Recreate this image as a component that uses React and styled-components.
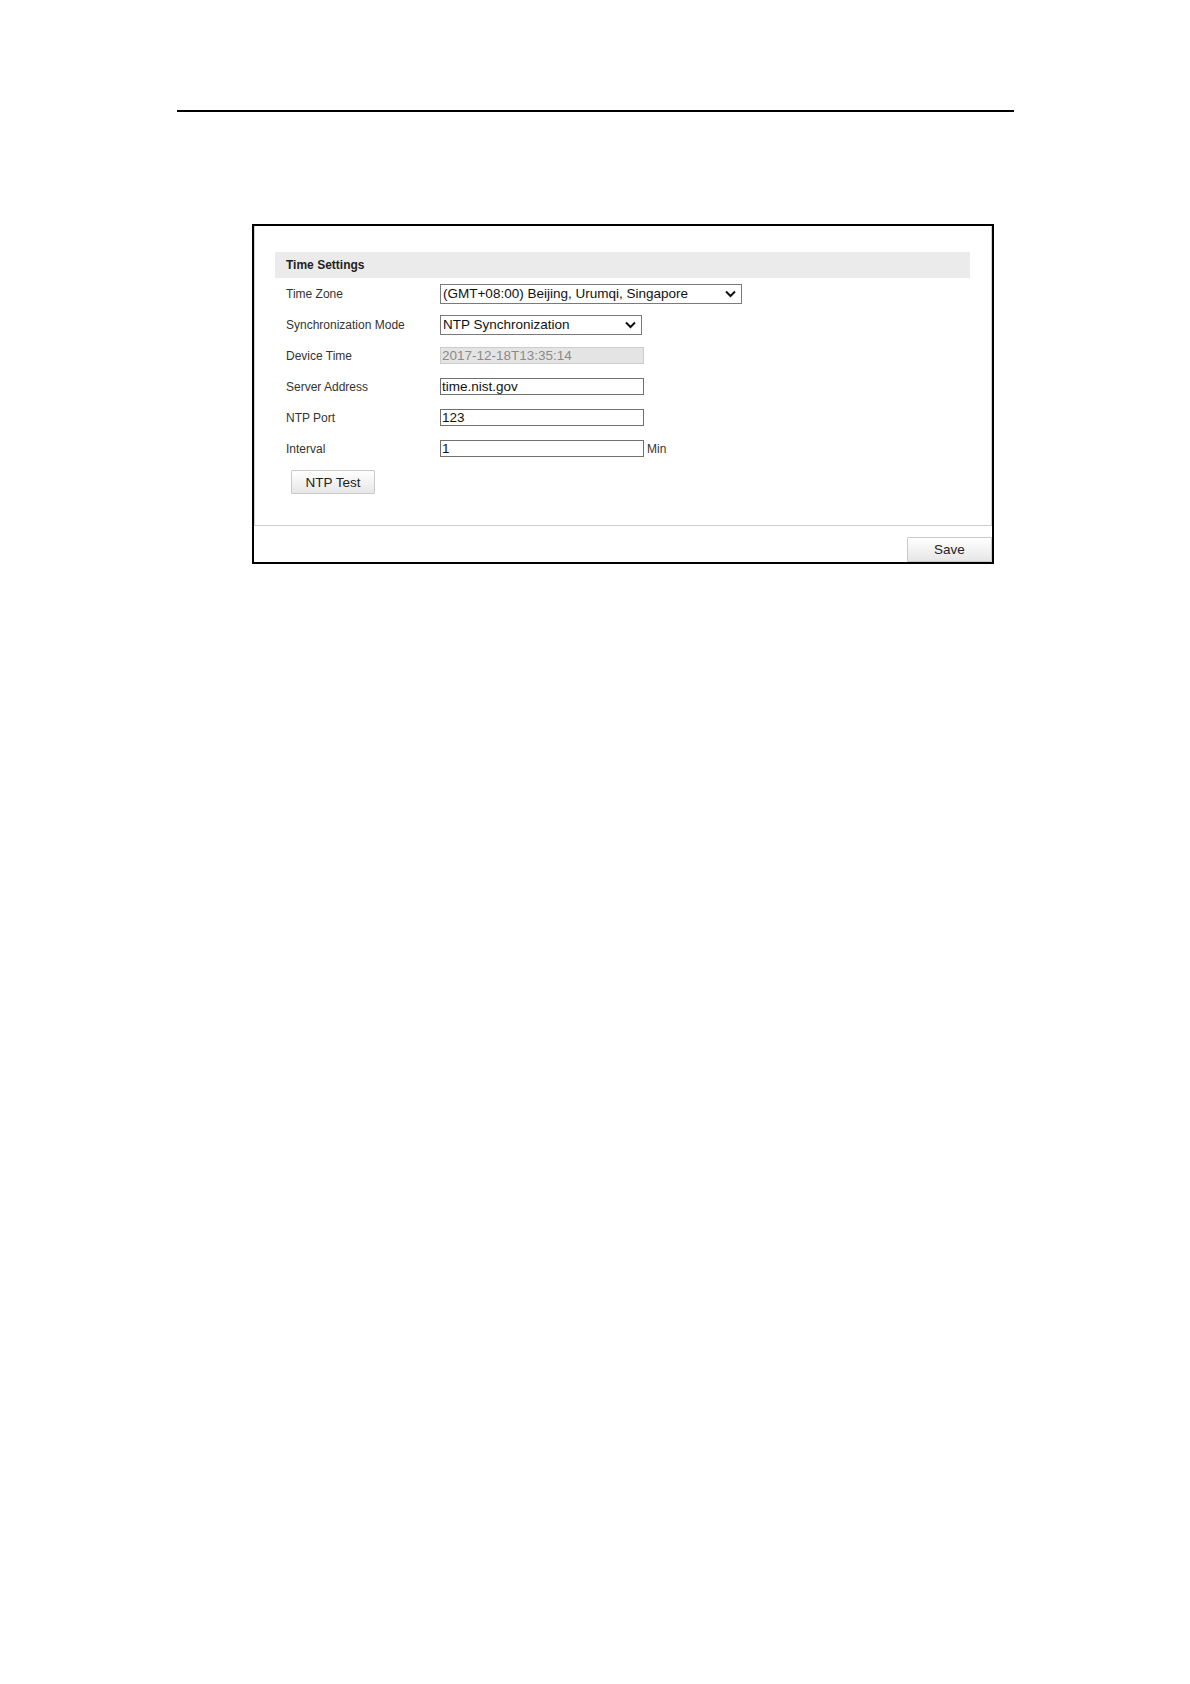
import React from 'react';
import styled, { createGlobalStyle } from 'styled-components';

const GlobalStyle = createGlobalStyle`
  body {
    margin: 0;
    background: #ffffff;
    font-family: "Liberation Sans", Arial, sans-serif;
    color: #222;
  }
`;

const Page = styled.div`
  width: 837px;
  margin-left: 177px;
  padding-top: 110px;
  height: 1574px;
`;

const Rule = styled.div`
  height: 2px;
  background: #000;
`;

const Frame = styled.div`
  box-sizing: border-box;
  width: 742px;
  height: 340px;
  margin: 112px 0 0 75px;
  border: 2px solid #000;
  display: flex;
  flex-direction: column;
`;

const Panel = styled.div`
  box-sizing: border-box;
  height: 300px;
  border: 1px solid #cfcfcf;
  border-top: none;
  padding: 26px 21px 0 20px;
`;

const SectionTitle = styled.div`
  height: 26px;
  line-height: 26px;
  background: #ebebeb;
  padding-left: 11px;
  font-size: 12px;
  font-weight: bold;
  color: #222;
`;

const Row = styled.div`
  display: grid;
  grid-template-columns: 154px auto;
  align-items: center;
  height: 31px;
  padding-left: 11px;
`;

const Label = styled.span`
  font-size: 12px;
  color: #333;
`;

const Control = styled.div`
  display: flex;
  align-items: center;
`;

const SelectBox = styled.div`
  box-sizing: border-box;
  display: flex;
  align-items: center;
  justify-content: space-between;
  width: ${(p) => p.$width}px;
  height: 20px;
  border: 1px solid #7a7a7a;
  background: #fff;
  padding: 0 5px 0 2px;
  font-size: 13.5px;
  color: #111;
`;

const TextBox = styled.div`
  box-sizing: border-box;
  width: 204px;
  height: 17px;
  line-height: 15px;
  padding-left: 1px;
  font-size: 13.5px;
  border: 1px solid ${(p) => (p.$disabled ? '#cccccc' : '#707070')};
  background: ${(p) => (p.$disabled ? '#e4e4e4' : '#fff')};
  color: ${(p) => (p.$disabled ? '#8a8a8a' : '#111')};
`;

const Unit = styled.span`
  margin-left: 3px;
  font-size: 12px;
  color: #333;
`;

const ButtonRow = styled.div`
  margin-top: 6px;
  padding-left: 16px;
`;

const Button = styled.button`
  box-sizing: border-box;
  width: ${(p) => p.$width}px;
  height: ${(p) => p.$height}px;
  padding: 0;
  border: 1px solid #c9c9c9;
  border-radius: 1px;
  background: linear-gradient(#ffffff, #e6e6e6);
  font-family: "Liberation Sans", Arial, sans-serif;
  font-size: 13.5px;
  color: #222;
`;

const Footer = styled.div`
  flex: 1;
  display: flex;
  justify-content: flex-end;
  align-items: flex-end;
`;

function Chevron() {
  return (
    <svg width="11" height="8" viewBox="0 0 11 8">
      <polyline points="1,1.5 5.5,6 10,1.5" fill="none" stroke="#111" strokeWidth="2" />
    </svg>
  );
}

function Select({ width, value }) {
  return (
    <SelectBox $width={width}>
      <span>{value}</span>
      <Chevron />
    </SelectBox>
  );
}

export default function App() {
  return (
    <>
      <GlobalStyle />
      <Page>
        <Rule />
        <Frame>
          <Panel>
            <SectionTitle>Time Settings</SectionTitle>
            <Row>
              <Label>Time Zone</Label>
              <Control>
                <Select width={302} value="(GMT+08:00) Beijing, Urumqi, Singapore" />
              </Control>
            </Row>
            <Row>
              <Label>Synchronization Mode</Label>
              <Control>
                <Select width={202} value="NTP Synchronization" />
              </Control>
            </Row>
            <Row>
              <Label>Device Time</Label>
              <Control>
                <TextBox $disabled>2017-12-18T13:35:14</TextBox>
              </Control>
            </Row>
            <Row>
              <Label>Server Address</Label>
              <Control>
                <TextBox>time.nist.gov</TextBox>
              </Control>
            </Row>
            <Row>
              <Label>NTP Port</Label>
              <Control>
                <TextBox>123</TextBox>
              </Control>
            </Row>
            <Row>
              <Label>Interval</Label>
              <Control>
                <TextBox>1</TextBox>
                <Unit>Min</Unit>
              </Control>
            </Row>
            <ButtonRow>
              <Button $width={84} $height={24}>NTP Test</Button>
            </ButtonRow>
          </Panel>
          <Footer>
            <Button $width={85} $height={25}>Save</Button>
          </Footer>
        </Frame>
      </Page>
    </>
  );
}
